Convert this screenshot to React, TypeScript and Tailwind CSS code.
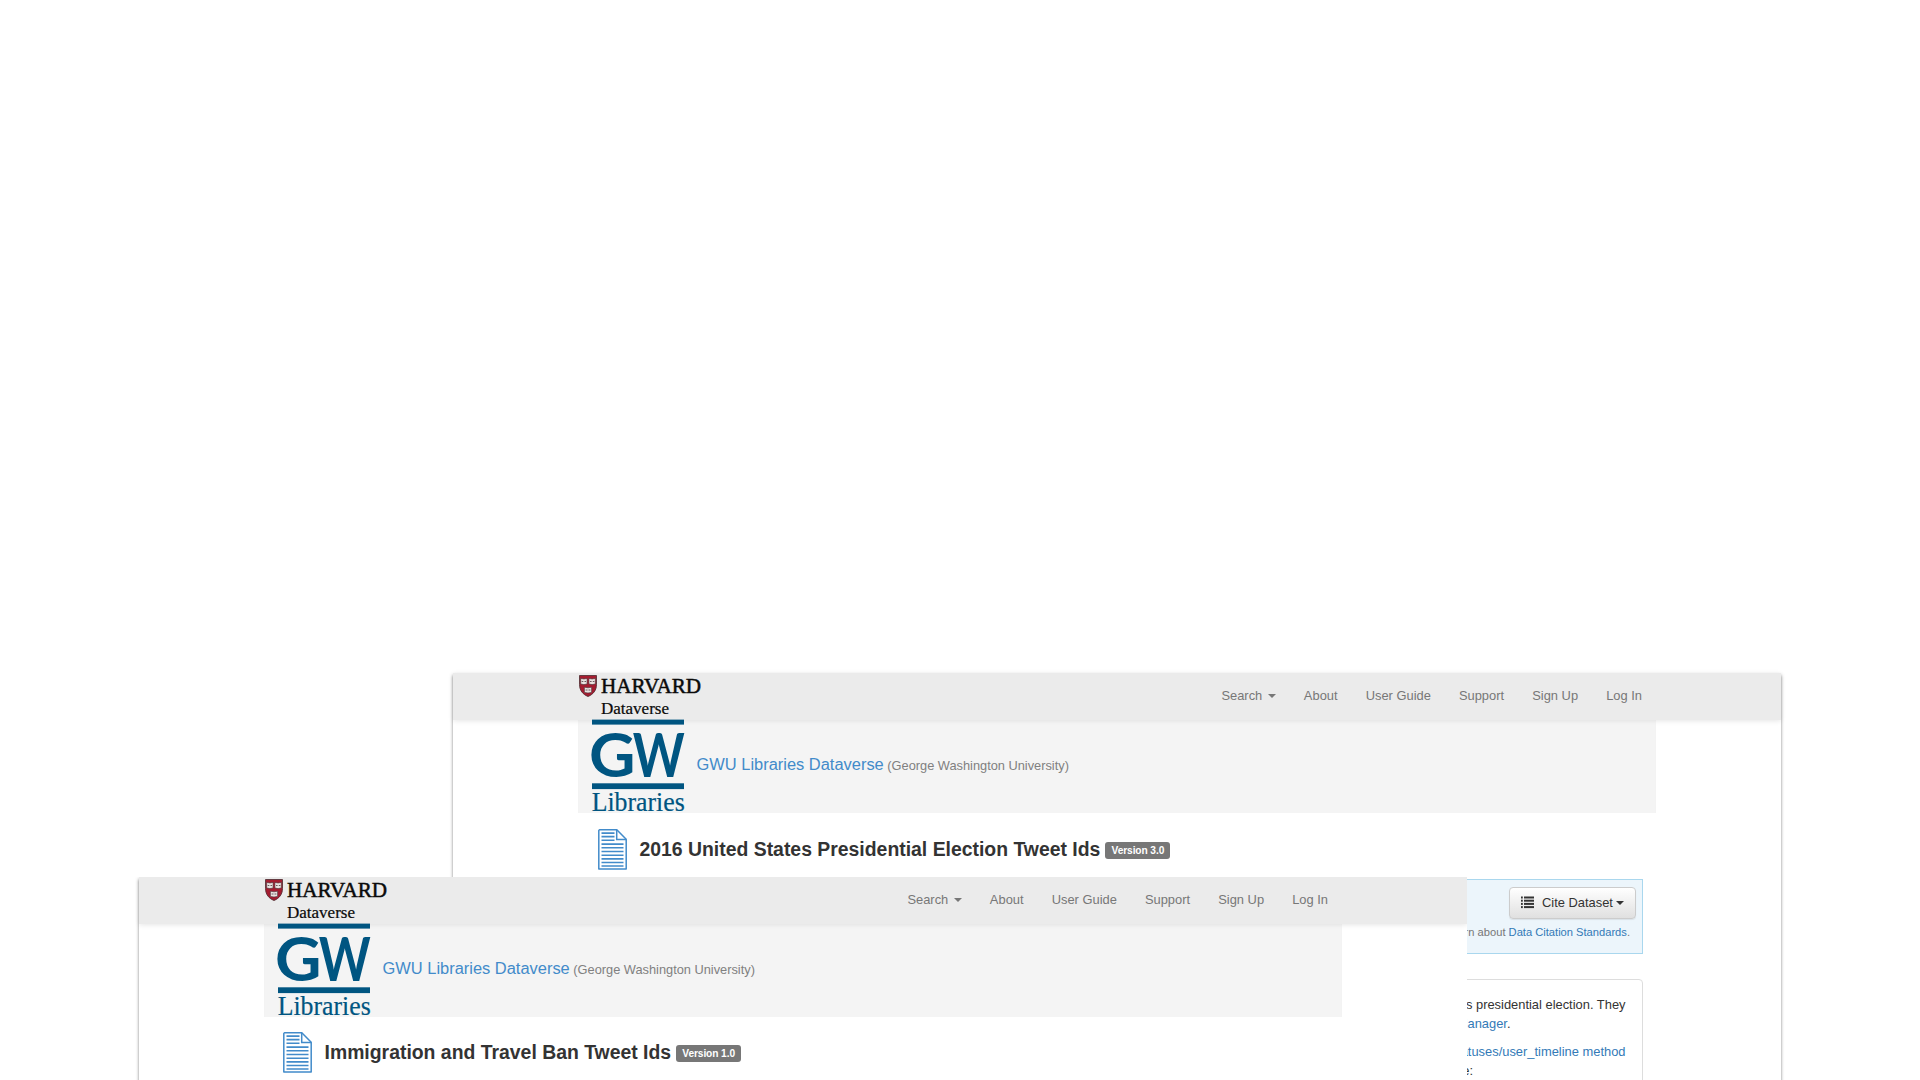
import type { ReactNode } from "react";

const links = ["About", "User Guide", "Support", "Sign Up", "Log In"];

function Shield() {
  return (
    <svg className="mt-[2px] h-[22px] w-[18px] shrink-0" viewBox="0 0 18 22">
      <path d="M.5.5h17v9c0 6-3.500 10-8.500 12C4 19.500.5 15.500.5 9.500z" fill="#a51c30" stroke="#4a2a2e" strokeWidth=".8" />
      <g fill="#e9e2e0" stroke="#453338" strokeWidth=".6">
        <path d="M1.700 3.400l3.200.6 3.200-.6v5.600l-3.200.6-3.200-.6z" />
        <path d="M9.900 3.400l3.200.6 3.200-.6v5.600l-3.200.6-3.200-.6z" />
        <path d="M5.400 12.200l3.600.6 3.600-.6v5.200l-3.600.6-3.600-.6z" />
      </g>
      <g stroke="#5c4a4e" strokeWidth=".9">
        <path d="M2.700 6.500h1.600M5.500 6.500h1.600M11 6.500h1.600M13.800 6.500h1.600M6.600 15h1.900M9.500 15h1.900" />
      </g>
    </svg>
  );
}

function HarvardLogo() {
  return (
    <div className="-ml-[0.5px] flex w-[126px] gap-1">
      <Shield />
      <svg className="h-[46px] w-[104px] overflow-visible" viewBox="0 0 104 46" fontFamily="Liberation Serif, serif" fill="#0a0a0a">
        <text x="0" y="20" fontSize="21" textLength="100" lengthAdjust="spacingAndGlyphs" stroke="#0a0a0a" strokeWidth=".5">HARVARD</text>
        <text x="0" y="40.600" fontSize="15.800" textLength="68" lengthAdjust="spacingAndGlyphs" stroke="#0a0a0a" strokeWidth=".2">Dataverse</text>
      </svg>
    </div>
  );
}

function GwLogo() {
  return (
    <svg className="h-[93px] w-[93px] overflow-visible" viewBox="0.6 0.4 93 93" fill="#005581">
      <rect x="0.600" y="0" width="92" height="5" />
      <g fontFamily="Lato, sans-serif" fontWeight="700" fontSize="62">
        <text x="-2.300" y="57" textLength="46.500" lengthAdjust="spacingAndGlyphs">G</text>
        <text x="41.300" y="57" textLength="52" lengthAdjust="spacingAndGlyphs">W</text>
      </g>
      <rect x="0.600" y="63.700" width="92" height="5.800" />
      <text x="0.300" y="91.500" fontFamily="Liberation Serif, serif" fontSize="26.500" textLength="93" lengthAdjust="spacingAndGlyphs" stroke="#005581" strokeWidth=".2">Libraries</text>
    </svg>
  );
}

function DocumentIcon() {
  return (
    <svg className="h-[41px] w-[29px] shrink-0" viewBox="0 0 29 41" fill="none" stroke="#428bca">
      <path d="M1.500.8h17.300l9.400 9.500V40H.8V1.500z" strokeWidth="1.500" strokeLinejoin="round" fill="#fff" />
      <path d="M18.700.8v9.700h9.500" strokeWidth="1.500" />
      <path d="M3.500 4.100h13M3.500 7.600h13M3.500 11.200h13M3.500 15.100h22M3.500 18.800h22M3.500 22.500h22M3.500 26.200h22M3.500 29.900h22M3.500 33.500h22M3.500 37h22" strokeWidth="1.600" />
    </svg>
  );
}

function Caret() {
  return <span className="inline-block border-x-4 border-t-4 border-x-transparent border-t-current" />;
}

type WindowProps = { title: string; version: string; titleClass: string; className: string; children?: ReactNode };

function DataverseWindow({ title, version, titleClass, className, children }: WindowProps) {
  return (
    <section className={`absolute w-[1328px] bg-white shadow-[0_1.500px_3px_rgba(0,0,0,0.5)] ${className}`}>
      <header className="relative z-10 flex h-[47px] justify-between bg-[#ebebeb] pl-[126px] pr-[139px] shadow-[0_1px_5px_rgba(0,0,0,0.1)]">
        <HarvardLogo />
        <nav className="flex h-[46px] items-center gap-[28.100px] text-[12.900px] text-[#777]">
          <span className="flex items-center gap-[5.500px]">
            Search <Caret />
          </span>
          {links.map((l) => (
            <span key={l}>{l}</span>
          ))}
        </nav>
      </header>
      <div className="relative z-20 ml-[125px] flex h-[93.400px] w-[1078px] items-start bg-[#f4f4f4] pl-[13.500px] shadow-[inset_0_4px_4px_-3px_rgba(0,0,0,0.08)]">
        <GwLogo />
        <p className="ml-3 mt-[32px] whitespace-nowrap text-[12.800px] leading-6 text-[#808080]">
          <span className="text-[16.450px] text-[#428bca]">GWU Libraries Dataverse</span> (George Washington University)
        </p>
      </div>
      <div className={`flex items-start ${titleClass}`}>
        <DocumentIcon />
        <h1 className="ml-[13px] mt-[8px] whitespace-nowrap text-[19.400px] font-bold leading-6 text-[#333]">{title}</h1>
        <span className="ml-[5px] mt-[13px] flex h-[17px] w-[65px] items-center justify-center rounded-[3px] bg-[#777] text-[10.200px] font-bold tracking-[-0.1px] text-white">
          {version}
        </span>
      </div>
      {children}
    </section>
  );
}

function ListIcon() {
  return (
    <svg className="h-[13px] w-[13px]" viewBox="0 0 13 13" fill="#333">
      {[0.5, 3.7, 6.9, 10.1].map((y) => (
        <g key={y}>
          <rect x="0" y={y} width="1.800" height="2" />
          <rect x="3" y={y} width="10" height="2" />
        </g>
      ))}
    </svg>
  );
}

export default function App() {
  return (
    <main className="relative h-[1080px] w-[1920px] overflow-hidden bg-white font-['Liberation_Sans',Arial,sans-serif]">
      <DataverseWindow
        title="2016 United States Presidential Election Tweet Ids"
        version="Version 3.0"
        className="left-[453px] top-[673px] h-[600px]"
        titleClass="pl-[144.500px] pt-[15.600px] h-[65.600px]"
      >
        <div className="ml-[125px] flex h-[75px] w-[1065px] flex-col items-end border border-[#a9d7ee] bg-[#ecf5fb] pr-[6px] pt-[7px]">
          <button className="flex h-8 w-[127px] items-center rounded-[4px] border border-[#ccc] bg-linear-to-b from-white to-[#e0e0e0] pl-[11px] text-[12.900px] text-[#333] shadow-[0_1px_1px_rgba(0,0,0,0.08)]">
            <ListIcon />
            <span className="ml-2 mr-[3px] whitespace-nowrap">Cite Dataset</span>
            <Caret />
          </button>
          <p className="mr-[6px] mt-[5px] text-[11.150px] leading-4 text-[#777]">
            Learn about <span className="text-[#337ab7]">Data Citation Standards</span>.
          </p>
        </div>
        <div className="ml-[125px] mt-[25px] h-[200px] w-[1065px] rounded-[4px] border border-[#ddd] pr-[16.500px] pt-[15.500px] text-right text-[12.900px] leading-[19px] text-[#333]">
          <p>United States presidential election. They</p>
          <p className="pr-[115px]">
            <span className="text-[#337ab7]">Social Feed Manager</span>.
          </p>
          <p className="mt-[9px] text-[#337ab7]">statuses/user_timeline method</p>
          <p className="pr-[152.500px]">here:</p>
        </div>
      </DataverseWindow>
      <DataverseWindow
        title="Immigration and Travel Ban Tweet Ids"
        version="Version 1.0"
        className="left-[139px] top-[877px] h-[400px] [clip-path:inset(0_0_0_-4px)]"
        titleClass="pl-[143.500px] pt-[14.600px]"
      />
    </main>
  );
}
